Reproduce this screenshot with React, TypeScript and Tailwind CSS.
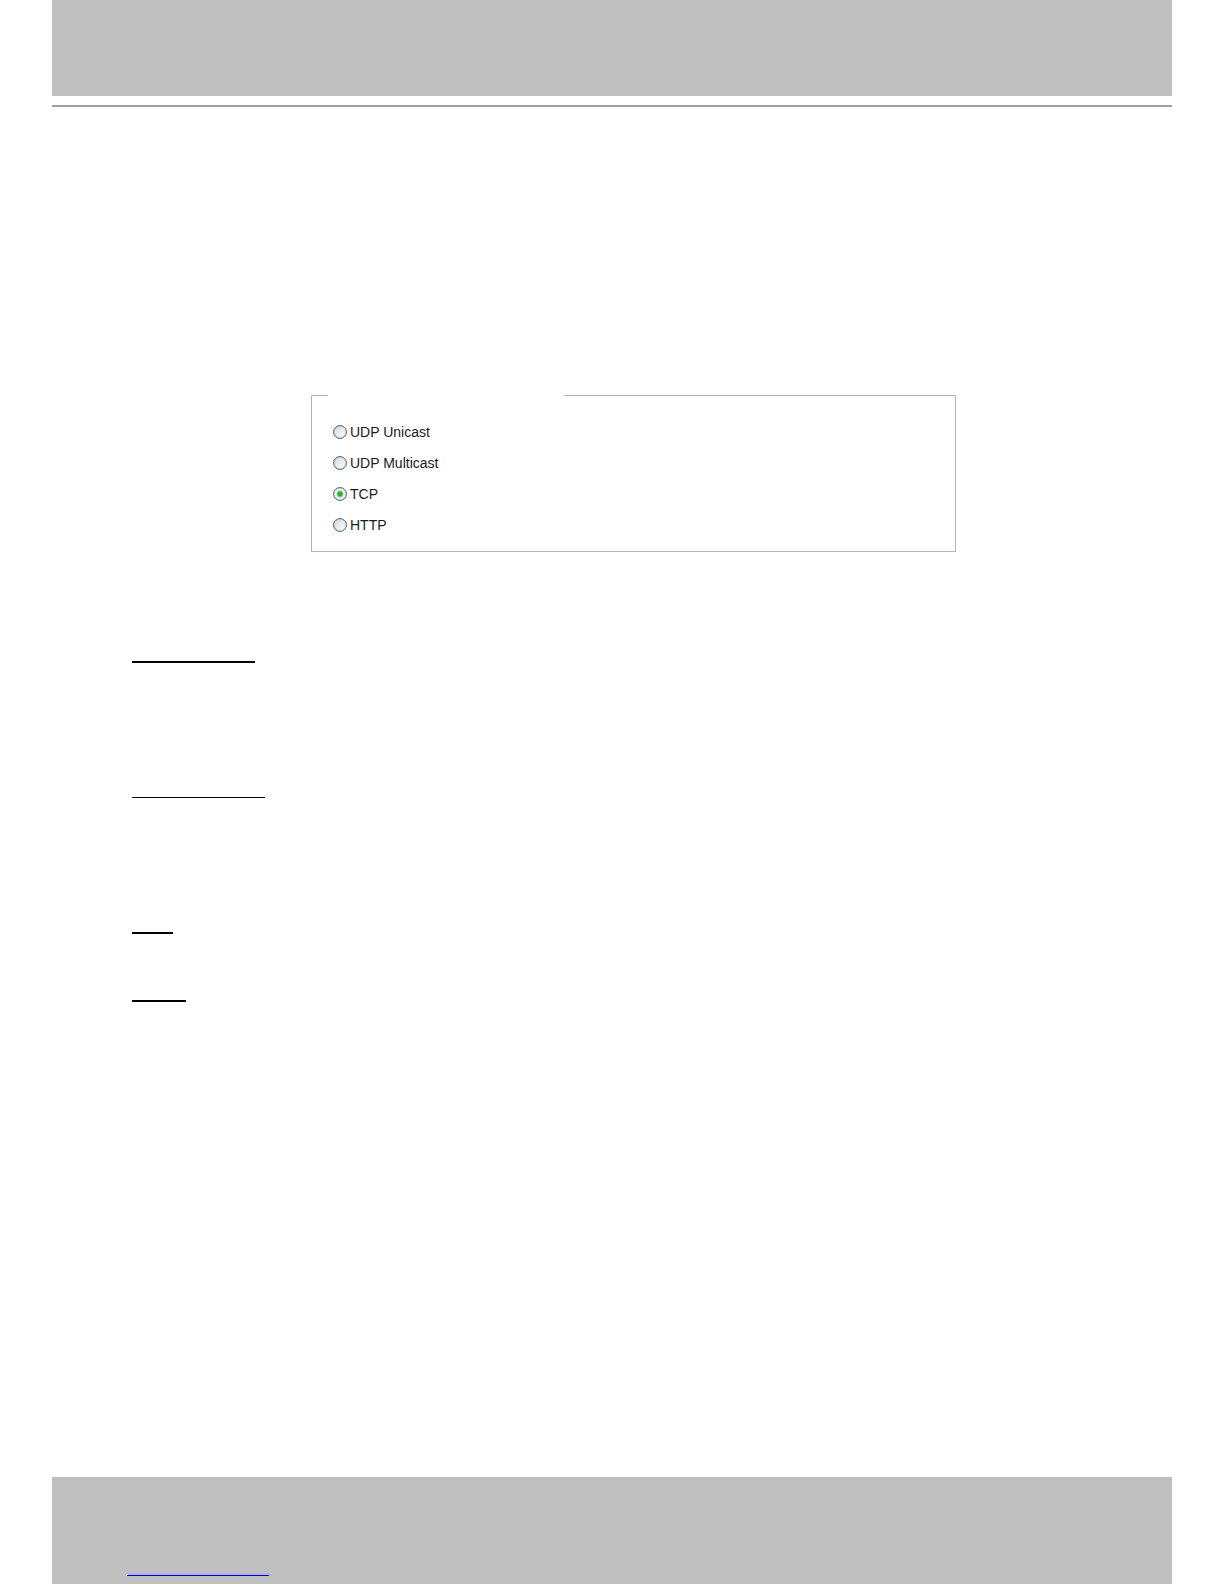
import { useState } from "react";

const protocols = ["UDP Unicast", "UDP Multicast", "TCP", "HTTP"];

function ProtocolOptions() {
  const [selected, setSelected] = useState("TCP");

  return (
    <fieldset className="ml-[259px] mr-[216px] border border-[#b4b4b4] px-4 pb-[11px]">
      {/* Blank legend leaves a gap in the top border */}
      <legend className="h-px w-[236px]" />
      <div className="flex flex-col items-start pl-[5px] pt-5">
        {protocols.map((name) => (
          <label
            key={name}
            className="flex h-[31px] items-center gap-[3px] text-sm text-[#1c1a24]"
          >
            <input
              type="radio"
              name="protocol"
              value={name}
              checked={selected === name}
              onChange={() => setSelected(name)}
              className="size-[14px] shrink-0 appearance-none rounded-full border border-[#4f7599] bg-[linear-gradient(135deg,#d6d9d8,#ffffff)] shadow-[inset_0_0_1px_#4f7599] checked:bg-[radial-gradient(circle,#2fae35_0px,#2fae35_2px,#f1f5f1_4px)]"
            />
            <span className="pt-px">{name}</span>
          </label>
        ))}
      </div>
    </fieldset>
  );
}

export default function App() {
  return (
    <div className="flex min-h-screen flex-col bg-white px-[52px] font-['Liberation_Sans',Arial,sans-serif]">
      <header className="border-b-2 border-[#a0a0a0] pb-[9px]">
        <div className="h-24 bg-[#c0c0c0]" />
      </header>

      <main className="flex-1 pt-72">
        <ProtocolOptions />

        {/* Section rules */}
        <div className="flex flex-col items-start pl-20 pt-[109px]">
          <div className="h-0.5 w-[123px] bg-black" />
          <div className="mt-[134px] h-px w-[133px] bg-black" />
          <div className="mt-[134px] h-0.5 w-[41px] bg-black" />
          <div className="mt-[66px] h-0.5 w-[54px] bg-black" />
        </div>
      </main>

      <footer className="h-[107px] bg-[#c0c0c0] pl-[75px] pt-24">
        <a
          href="#"
          className="block h-[3px] w-[142px] border-b border-[#0000c0] bg-[#b4b4e4]"
        />
      </footer>
    </div>
  );
}
